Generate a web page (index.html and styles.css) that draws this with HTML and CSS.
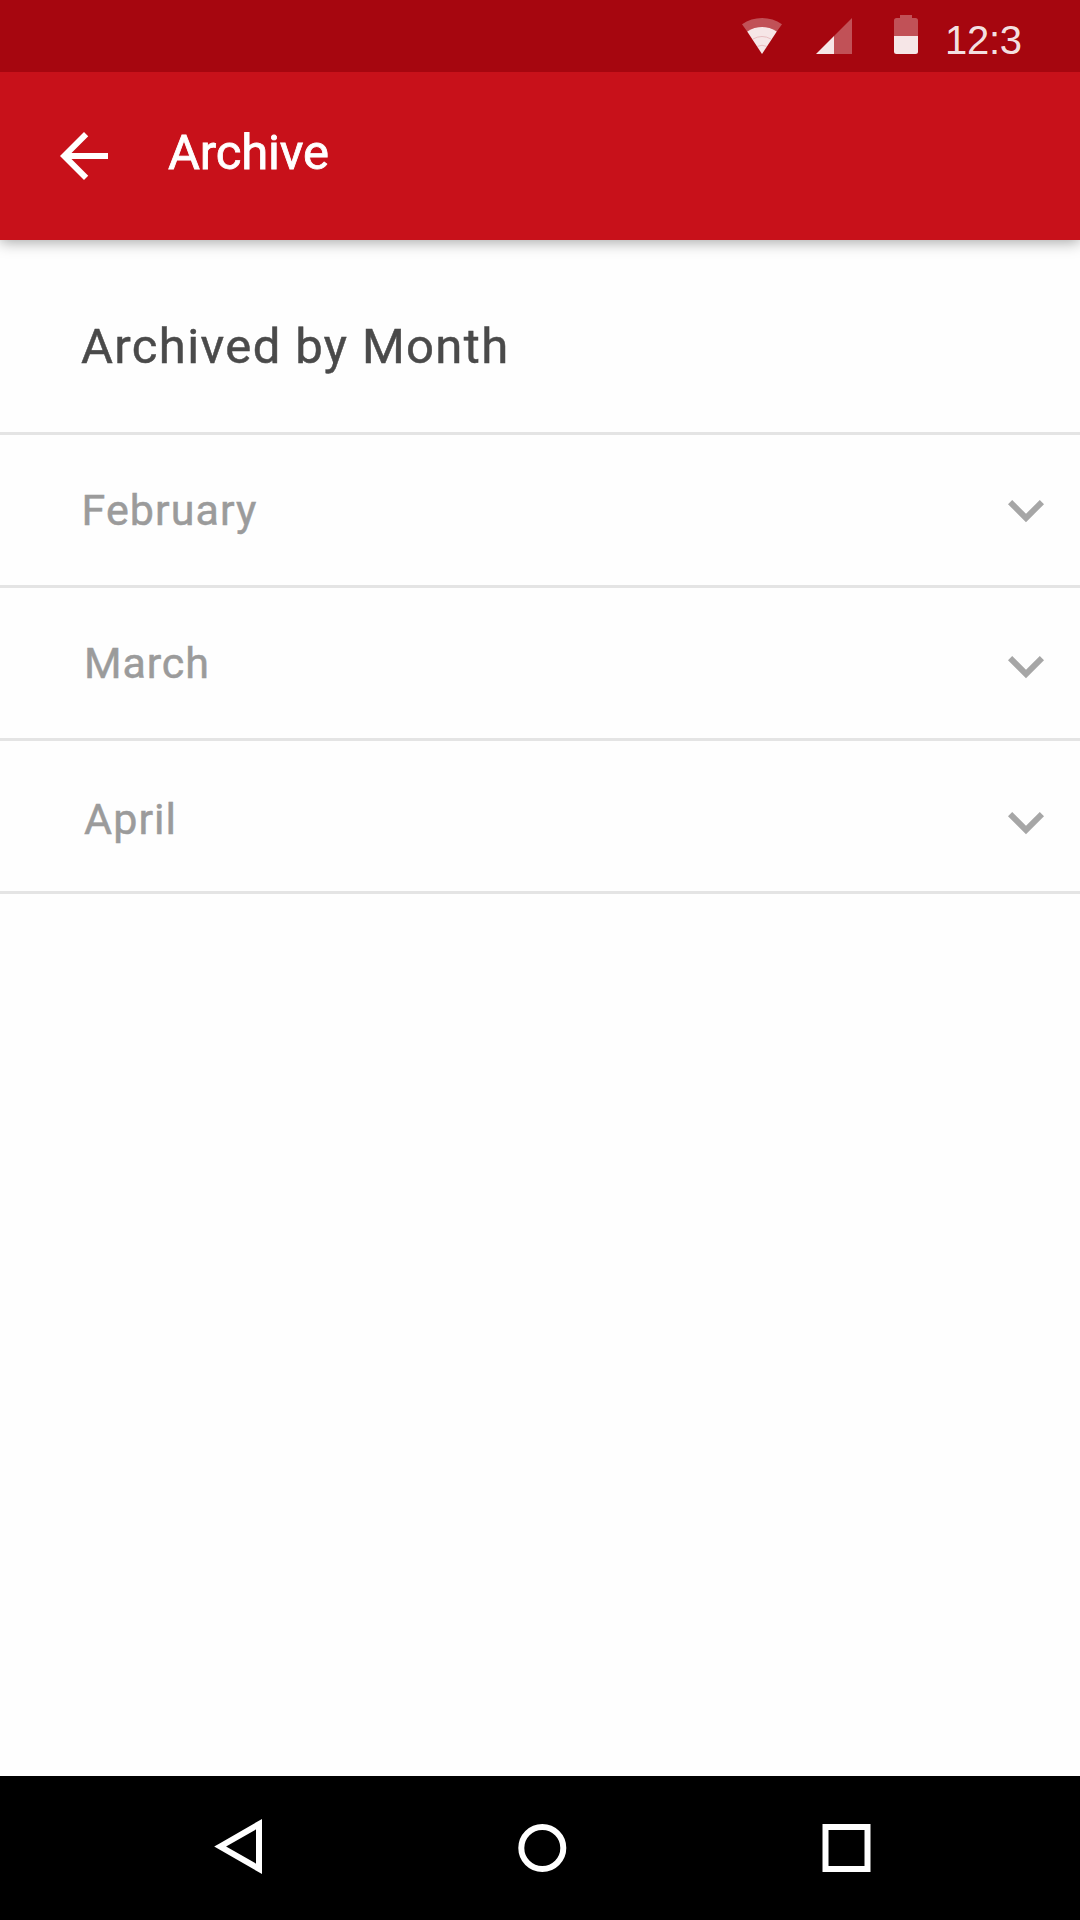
FILE: index.html
```html
<!DOCTYPE html>
<html lang="en">
<head>
<meta charset="utf-8">
<title>Archive</title>
<link rel="stylesheet" href="styles.css">
</head>
<body>
<div class="screen">
  <div class="status-bar">
    <svg class="wifi" width="40" height="36" viewBox="0 0 40 36">
      <path class="dim" d="M0 6.3Q9 0 20 0T40 6.3L34.8 13.4Q28 9 20 9T5.2 13.4z"/>
      <path class="lit" d="M5.2 13.4Q12 9 20 9T34.8 13.4L20 36z"/>
      <path class="wave" d="M11 21Q20 16 29 21M15 28.5Q20 26 25 28.5"/>
    </svg>
    <svg class="signal" width="36" height="36" viewBox="0 0 36 36">
      <path class="dim" d="M36 0v36H18V18z"/>
      <path class="lit" d="M18 18v18H0z"/>
    </svg>
    <svg class="battery" width="24" height="39" viewBox="0 0 24 39">
      <path class="dim" d="M6 0h12v3h3.500q2.500 0 2.500 2.500V21H0V5.500Q0 3 2.500 3H6z"/>
      <path class="lit" d="M0 21h24v15.500q0 2.500-2.500 2.500h-19Q0 39 0 36.500z"/>
    </svg>
    <span class="clock">12:3</span>
  </div>
  <header class="app-bar">
    <svg class="back" width="72" height="72" viewBox="0 0 24 24">
      <path d="M20 11H7.830l5.590-5.590L12 4l-8 8 8 8 1.410-1.410L7.830 13H20v-2z"/>
    </svg>
    <h1 class="title">Archive</h1>
  </header>
  <main class="content">
    <h2 class="section-title">Archived by Month</h2>
    <ul class="months">
      <li class="month february">
        <span class="name">February</span>
        <svg class="chevron" width="36" height="23" viewBox="0 0 36 23"><path d="M4.200 0L18 13.800 31.800 0 36 4.200l-18 18-18-18z"/></svg>
      </li>
      <li class="month march">
        <span class="name">March</span>
        <svg class="chevron" width="36" height="23" viewBox="0 0 36 23"><path d="M4.200 0L18 13.800 31.800 0 36 4.200l-18 18-18-18z"/></svg>
      </li>
      <li class="month april">
        <span class="name">April</span>
        <svg class="chevron" width="36" height="23" viewBox="0 0 36 23"><path d="M4.200 0L18 13.800 31.800 0 36 4.200l-18 18-18-18z"/></svg>
      </li>
    </ul>
  </main>
  <nav class="nav-bar">
    <svg width="48" height="56" viewBox="0 0 48 56"><path d="M6.200 27.500L45 5.200v44.600z"/></svg>
    <svg width="48" height="56" viewBox="0 0 48 56"><circle cx="24.300" cy="29" r="21"/></svg>
    <svg width="48" height="56" viewBox="0 0 48 56"><rect x="3.500" y="8" width="42" height="42"/></svg>
  </nav>
</div>
</body>
</html>
```
FILE: styles.css
```css
* {
  box-sizing: border-box;
}

body,
h1,
h2,
ul {
  margin: 0;
  padding: 0;
}

body {
  background: #fefefe;
  font-family: Roboto, sans-serif;
}

svg {
  display: block;
  flex: none;
  overflow: visible;
}

.screen {
  display: flex;
  flex-direction: column;
  width: 1080px;
  height: 1920px;
}

.status-bar {
  display: flex;
  align-items: flex-start;
  height: 72px;
  padding-left: 742px;
  background: #a6060f;
  z-index: 2;
}

.dim {
  fill: rgba(255, 255, 255, 0.3);
}

.lit {
  fill: rgba(255, 255, 255, 0.9);
}

.wave {
  fill: none;
  stroke: #e3b4b7;
  stroke-width: 0.8;
}

.wifi {
  margin: 18px 34px 0 0;
}

.signal {
  margin: 18px 42px 0 0;
}

.battery {
  margin-top: 15px;
}

.clock {
  margin: 17px 0 0 27px;
  color: rgba(255, 255, 255, 0.9);
  font: 40px/46px "Liberation Sans", sans-serif;
  letter-spacing: -0.300px;
}

.app-bar {
  display: flex;
  align-items: flex-start;
  height: 168px;
  padding: 48px 0 0 48px;
  background: #c8111a;
  box-shadow: 0 2px 14px rgba(0, 0, 0, 0.36);
  z-index: 1;
}

.back {
  fill: #fff;
}

.title {
  margin: 5px 0 0 48px;
  color: #fff;
  font-size: 49px;
  font-weight: 400;
  line-height: 56px;
  letter-spacing: -0.200px;
  -webkit-text-stroke: 0.800px #fff;
}

.content {
  flex: 1;
}

.section-title {
  height: 195px;
  padding: 79px 0 0 81px;
  border-bottom: 3px solid #e4e4e4;
  color: #4a4a4a;
  font-size: 49px;
  font-weight: 400;
  line-height: 56px;
  letter-spacing: 1.370px;
  -webkit-text-stroke: 0.500px #4a4a4a;
}

.months {
  list-style: none;
}

.month {
  display: flex;
  justify-content: space-between;
  align-items: flex-start;
  height: 153px;
  padding: 50px 36px 0 81.500px;
  border-bottom: 3px solid #e4e4e4;
  color: #9b9b9b;
  font-size: 43px;
  line-height: 50px;
  letter-spacing: 1.100px;
  -webkit-text-stroke: 0.500px #9b9b9b;
}

.march {
  padding-left: 84px;
  letter-spacing: 0.900px;
}

.april {
  padding-top: 53px;
  padding-left: 84px;
}

.chevron {
  margin-top: 15px;
  fill: #a6a6a6;
}

.march .chevron,
.april .chevron {
  margin-top: 18px;
}

.nav-bar {
  display: flex;
  align-items: flex-start;
  gap: 256px;
  height: 144px;
  padding: 43px 0 0 214px;
  background: #000;
}

.nav-bar svg {
  fill: none;
  stroke: #fff;
  stroke-width: 6px;
}
```
